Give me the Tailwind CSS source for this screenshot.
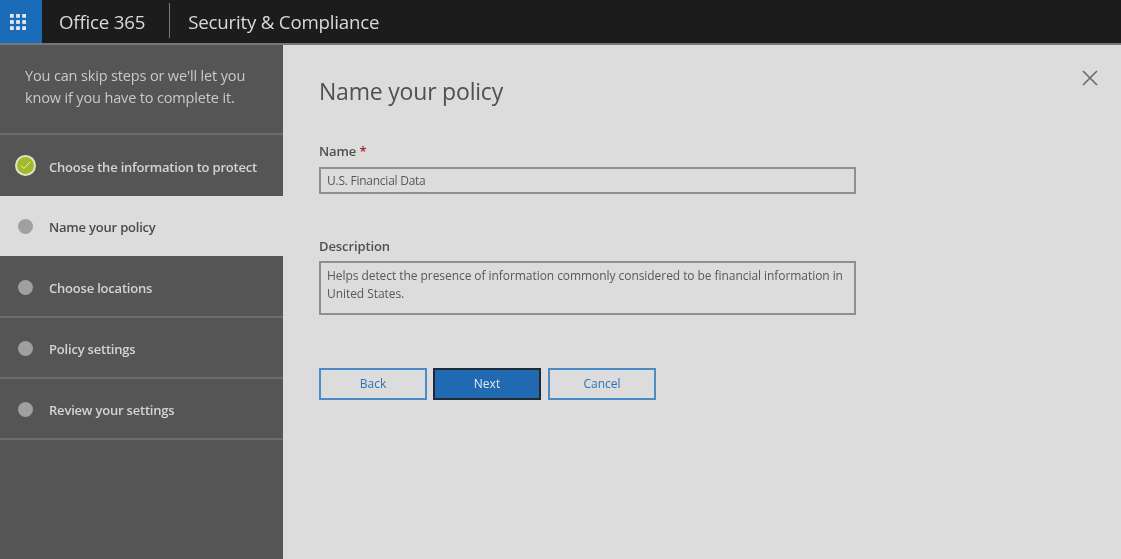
<!DOCTYPE html>
<html lang="en">
<head>
  <meta charset="UTF-8" />
  <title>Security &amp; Compliance</title>
  <script src="https://cdn.jsdelivr.net/npm/@tailwindcss/browser@4"></script>
</head>
<body class="h-[559px] overflow-hidden bg-[#dcdcdd] font-['Open_Sans',sans-serif] blur-[0.4px]">
  <!-- Top bar -->
  <header class="flex h-[45px] items-center border-b-2 border-[#77787a] bg-[#1c1c1d] text-[#d9d9d9]">
    <div class="flex h-full w-[42px] items-center justify-center bg-[#1a6cb8] pr-[6px]">
      <svg width="16" height="16" viewBox="0 0 17 17" fill="#e4eaf0">
        <rect x="0" y="0" width="4" height="4"/><rect x="6.5" y="0" width="4" height="4"/><rect x="13" y="0" width="4" height="4"/>
        <rect x="0" y="6.5" width="4" height="4"/><rect x="6.5" y="6.5" width="4" height="4"/><rect x="13" y="6.5" width="4" height="4"/>
        <rect x="0" y="13" width="4" height="4"/><rect x="6.5" y="13" width="4" height="4"/><rect x="13" y="13" width="4" height="4"/>
      </svg>
    </div>
    <span class="mt-px ml-[17px] text-[18.7px] tracking-[-0.2px]">Office 365</span>
    <div class="mb-[2px] ml-[24px] h-[35px] w-px bg-[#77787a]"></div>
    <span class="mt-px ml-[18px] text-[18.7px] tracking-[-0.2px]">Security &amp; Compliance</span>
  </header>

  <div class="flex h-[514px]">
    <!-- Wizard steps -->
    <aside class="w-[283px] shrink-0 bg-[#555556] text-[#d4d4d5]">
      <p class="h-[90px] border-b-2 border-[#6c6c6e] pt-[20px] pl-[25px] text-[14.5px] leading-[22px] tracking-[-0.15px] text-[#c9c9ca]">You can skip steps or we'll let you<br>know if you have to complete it.</p>
      <div class="flex h-[61px] items-center gap-[13px] pl-[15px] text-[13px] font-semibold">
        <span class="flex size-[21px] items-center justify-center rounded-full border-2 border-[#dfe3c8] bg-[#a4b82c]">
          <svg width="11" height="9" viewBox="0 0 11 9" fill="none" stroke="#e8eccd" stroke-width="1"><path d="M1 4.5 4 7.5 10 1"/></svg>
        </span>
        <span class="mt-[4px] tracking-[-0.2px]">Choose the information to protect</span>
      </div>
      <div class="flex h-[60px] items-center gap-[16px] bg-[#dcdcdd] pl-[18px] text-[13px] font-semibold text-[#4a4a4b]">
        <span class="size-[15px] rounded-full bg-[#a0a0a1]"></span>
        <span class="mt-[4px] tracking-[-0.2px]">Name your policy</span>
      </div>
      <div class="flex h-[62px] items-center gap-[16px] border-b-2 border-[#6c6c6e] pl-[18px] text-[13px] font-semibold">
        <span class="mt-[2px] size-[15px] rounded-full bg-[#a0a0a1]"></span>
        <span class="mt-[6px] tracking-[-0.2px]">Choose locations</span>
      </div>
      <div class="flex h-[61px] items-center gap-[16px] border-b-2 border-[#6c6c6e] pl-[18px] text-[13px] font-semibold">
        <span class="mt-[2px] size-[15px] rounded-full bg-[#a0a0a1]"></span>
        <span class="mt-[4px] tracking-[-0.2px]">Policy settings</span>
      </div>
      <div class="flex h-[61px] items-center gap-[16px] border-b-2 border-[#6c6c6e] pl-[18px] text-[13px] font-semibold">
        <span class="mt-[2px] size-[15px] rounded-full bg-[#a0a0a1]"></span>
        <span class="mt-[4px] tracking-[-0.2px]">Review your settings</span>
      </div>
    </aside>

    <!-- Form -->
    <main class="relative flex-1 pl-[36px] text-[#58585a]">
      <button class="absolute top-[25px] right-[23px] text-[#6a6a6c]">
        <svg width="16" height="16" viewBox="0 0 16 16" fill="none" stroke="currentColor" stroke-width="1.6"><path d="M1 1 15 15M15 1 1 15"/></svg>
      </button>
      <h1 class="mt-[28px] text-[23px] leading-[36px] tracking-[-0.2px] text-[#505052]">Name your policy</h1>

      <label class="mt-[33px] block text-[13px] leading-[18px] font-semibold tracking-[-0.1px] text-[#505052]">Name <span class="text-[#a4262c]">*</span></label>
      <div class="mt-[7px] flex h-[27px] w-[537px] items-center border-2 border-[#8f8f91] pl-[6px] text-[12px] tracking-[-0.25px]">U.S. Financial Data</div>

      <label class="mt-[43px] block text-[13px] leading-[18px] font-semibold tracking-[-0.1px] text-[#505052]">Description</label>
      <div class="mt-[6px] h-[54px] w-[537px] border-2 border-[#8f8f91] pt-[4px] pl-[6px] text-[12px] leading-[18px] tracking-[-0.06px]">Helps detect the presence of information commonly considered to be financial information in United States.</div>

      <div class="mt-[53px] flex gap-[6px] text-[12px]">
        <button class="h-[32px] w-[108px] border-2 border-[#4a8cc8] text-[#2c73b5]">Back</button>
        <button class="h-[32px] w-[108px] border-2 border-[#1f2a36] bg-[#1f6ab0] text-[#e3ebf3]">Next</button>
        <button class="ml-px h-[32px] w-[108px] border-2 border-[#4a8cc8] text-[#2c73b5]">Cancel</button>
      </div>
    </main>
  </div>
</body>
</html>
